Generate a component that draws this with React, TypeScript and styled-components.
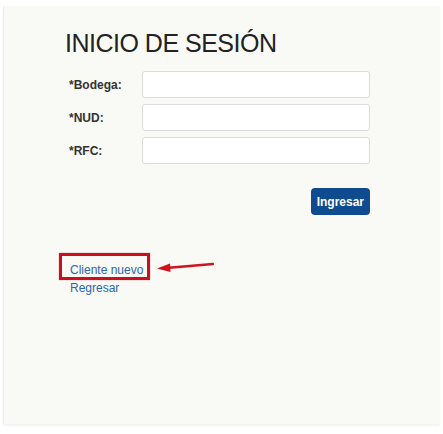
import styled, { createGlobalStyle } from "styled-components";

const GlobalStyle = createGlobalStyle`
  html, body {
    margin: 0;
    padding: 0;
    background: #ffffff;
    font-family: "Liberation Sans", Arial, sans-serif;
  }
`;

const fields = ["*Bodega:", "*NUD:", "*RFC:"];

export default function App() {
  return (
    <>
      <GlobalStyle />
      <Panel>
        <Title>INICIO DE SESIÓN</Title>
        <Form>
          {fields.map((f) => (
            <Row key={f}>
              <Label>{f}</Label>
              <Input type="text" />
            </Row>
          ))}
          <Actions>
            <Button type="button">Ingresar</Button>
          </Actions>
        </Form>
        <Links>
          <Link href="#">Cliente nuevo</Link>
          <Link href="#">Regresar</Link>
          <Highlight />
          <Arrow width="58" height="12" viewBox="0 0 58 12">
            <path d="M57 3 L13 6.8" stroke="#d0131c" strokeWidth="2.4" strokeLinecap="round" />
            <path d="M1 7.6 L14 2.4 L14.6 11 Z" fill="#d0131c" />
          </Arrow>
        </Links>
      </Panel>
    </>
  );
}

const Panel = styled.div`
  margin: 6px 3px 10px 3px;
  height: 418px;
  box-sizing: border-box;
  background: #f9f9f5;
  border-left: 1px solid #ededea;
  box-shadow: 0 2px 2px rgba(0, 0, 0, 0.05);
  padding: 22px 0 0 61px;
`;

const Title = styled.h1`
  margin: 0;
  font-size: 25px;
  letter-spacing: -0.5px;
  font-weight: normal;
  color: #222;
  line-height: 30px;
`;

const Form = styled.form`
  width: 301px;
  margin: 13px 0 0 4px;
  display: flex;
  flex-direction: column;
  gap: 6px;
`;

const Row = styled.div`
  display: flex;
  align-items: center;
`;

const Label = styled.label`
  width: 73px;
  font-size: 12px;
  font-weight: bold;
  color: #333;
`;

const Input = styled.input`
  width: 228px;
  height: 27px;
  box-sizing: border-box;
  border: 1px solid #dcdcdc;
  border-radius: 3px;
  background: #fff;
`;

const Actions = styled.div`
  display: flex;
  justify-content: flex-end;
  margin-top: 18px;
`;

const Button = styled.button`
  height: 27px;
  padding: 0 6px;
  background: #0f4b8f;
  color: #fff;
  border: none;
  border-radius: 4px;
  font-family: "Liberation Sans", Arial, sans-serif;
  font-size: 12px;
  font-weight: bold;
`;

const Links = styled.div`
  position: relative;
  display: flex;
  flex-direction: column;
  align-items: flex-start;
  margin: 46px 0 0 5px;
`;

const Link = styled.a`
  font-size: 12px;
  line-height: 18px;
  color: #2c66b0;
  text-decoration: none;
`;

const Highlight = styled.div`
  position: absolute;
  left: -11px;
  top: -8px;
  width: 85px;
  height: 21px;
  border: 3px solid #c8101e;
  box-shadow: 0 0 1px rgba(200, 16, 30, 0.6);
`;

const Arrow = styled.svg`
  position: absolute;
  left: 86px;
  top: 0;
`;
